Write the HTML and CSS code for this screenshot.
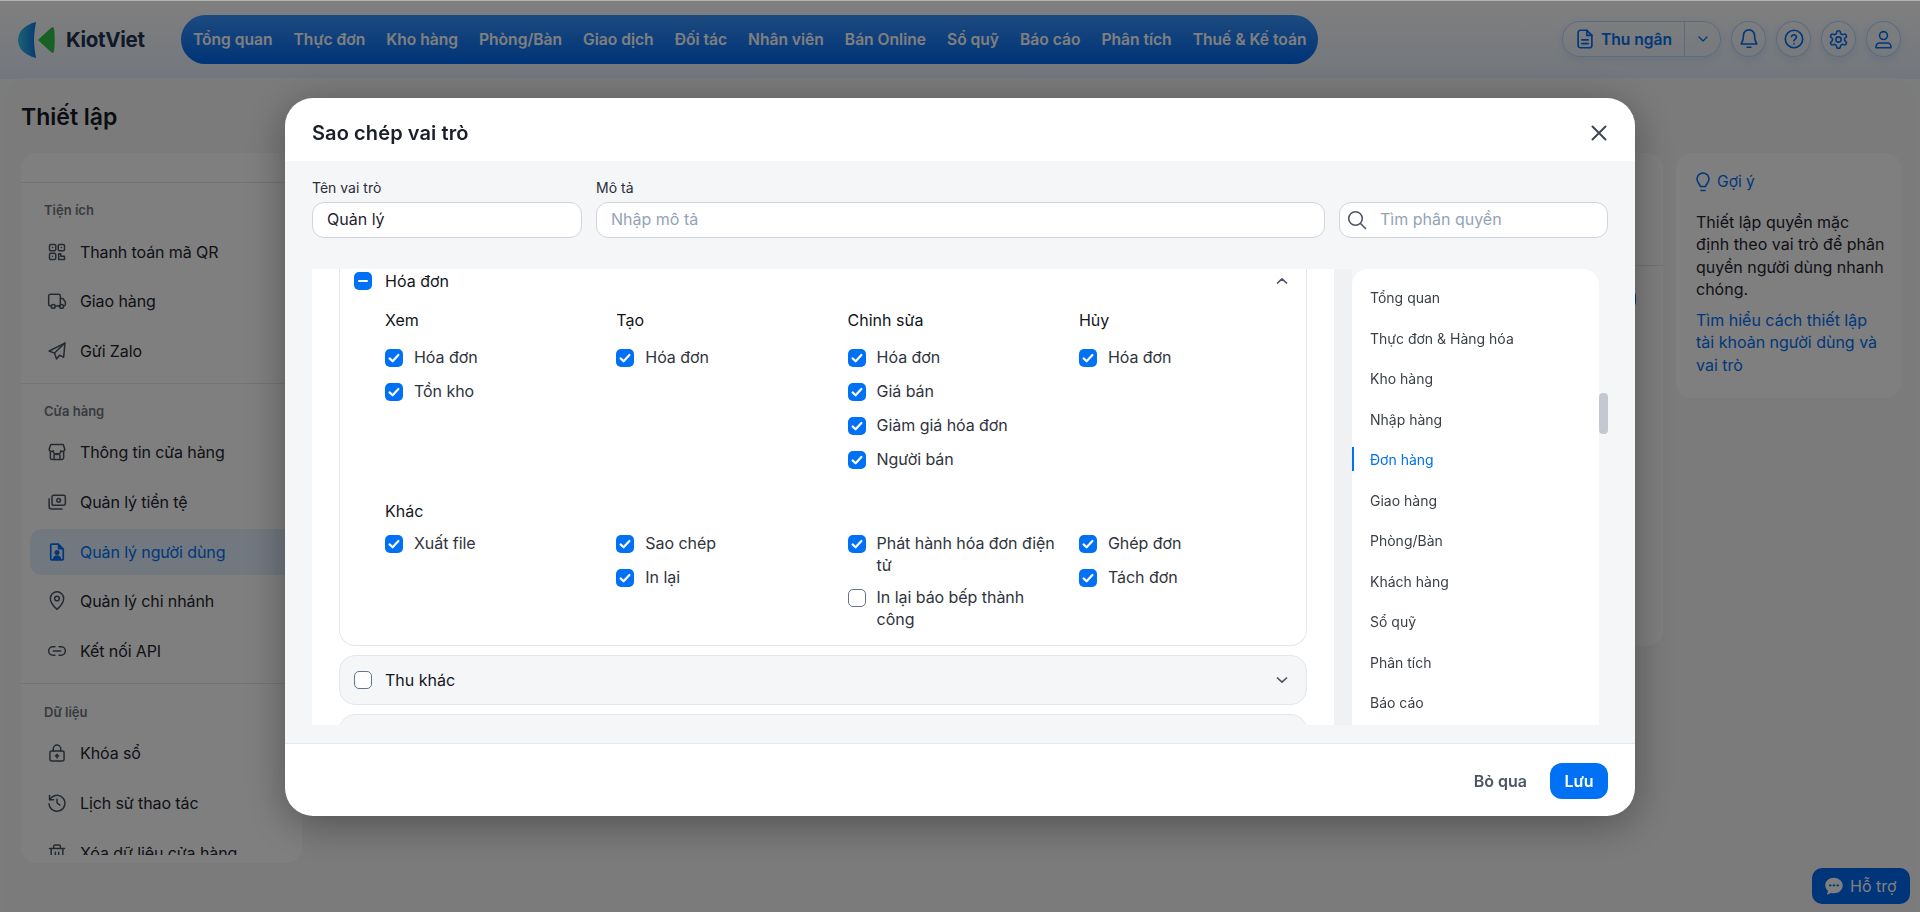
FILE: index.html
```html
<!DOCTYPE html>
<html lang="vi">
<head>
    <meta charset="UTF-8">
    <title>Thiết lập</title>
    <link rel="stylesheet" href="styles.css">
</head>
<body>
    <svg class="sprite" aria-hidden="true">
        <symbol id="i-check" viewBox="0 0 18 18"><path d="M4.6 9.4l3 2.9 5.8-6.3" fill="none" stroke="#fff" stroke-width="2.2" stroke-linecap="round" stroke-linejoin="round"/></symbol>
    </svg>

    <div class="page">
        <header class="topbar">
            <div class="logo">
                <svg width="38" height="36" viewBox="0 0 38 36">
                    <defs><linearGradient id="lens" x1="0" x2="1" y1="0" y2="0"><stop offset="0" stop-color="#36c6e8"/><stop offset="1" stop-color="#1274e0"/></linearGradient></defs>
                    <path d="M18 0C6 3 0 10 0 18s6 15 18 18c-1-6-2-12-2-18s1-12 2-18z" fill="url(#lens)"/>
                    <path d="M36 6c1 8 1 16 0 24-1 1-2 1-3 0L21 19c-1-1-1-1 0-2L33 6c1-1 2-1 3 0z" fill="#2fc24a"/>
                </svg>
                <span class="logo-text">KiotViet</span>
            </div>
            <nav class="main-nav">
                <a>Tổng quan</a>
                <a>Thực đơn</a>
                <a>Kho hàng</a>
                <a>Phòng/Bàn</a>
                <a>Giao dịch</a>
                <a>Đối tác</a>
                <a>Nhân viên</a>
                <a>Bán Online</a>
                <a>Sổ quỹ</a>
                <a>Báo cáo</a>
                <a>Phân tích</a>
                <a>Thuế &amp; Kế toán</a>
            </nav>
            <div class="top-actions">
                <div class="cashier">
                    <span class="cashier-main">
                        <svg class="ico" width="22" height="22" viewBox="0 0 24 24"><path d="M14 2.500H7a2.500 2.500 0 0 0-2.500 2.500v14A2.500 2.500 0 0 0 7 21.500h10a2.500 2.500 0 0 0 2.500-2.500V8z"/><path d="M14 2.500V8h5.500M8.500 13h7M8.500 17h7"/></svg>
                        Thu ngân
                    </span>
                    <span class="cashier-more">
                        <svg class="ico" width="16" height="16" viewBox="0 0 24 24"><path d="M6 9l6 6 6-6"/></svg>
                    </span>
                </div>
                <span class="round-btn"><svg class="ico" width="22" height="22" viewBox="0 0 24 24"><path d="M6 8a6 6 0 0 1 12 0c0 7 2.500 8.500 2.500 9.500h-17C3.500 16.500 6 15 6 8z"/><path d="M10 21h4"/></svg></span>
                <span class="round-btn"><svg class="ico" width="22" height="22" viewBox="0 0 24 24"><circle cx="12" cy="12" r="9.500"/><path d="M9.300 9.200a2.800 2.800 0 0 1 5.400.800c0 1.900-2.700 2.300-2.700 4"/><path d="M12 17.300v.2"/></svg></span>
                <span class="round-btn"><svg class="ico" width="21" height="21" viewBox="0 0 24 24"><path d="M12.220 2h-.44a2 2 0 0 0-2 2v.18a2 2 0 0 1-1 1.730l-.43.250a2 2 0 0 1-2 0l-.15-.080a2 2 0 0 0-2.730.730l-.220.380a2 2 0 0 0 .730 2.730l.150.100a2 2 0 0 1 1 1.720v.510a2 2 0 0 1-1 1.740l-.150.090a2 2 0 0 0-.730 2.730l.220.380a2 2 0 0 0 2.730.730l.150-.080a2 2 0 0 1 2 0l.430.250a2 2 0 0 1 1 1.730V20a2 2 0 0 0 2 2h.440a2 2 0 0 0 2-2v-.180a2 2 0 0 1 1-1.730l.430-.250a2 2 0 0 1 2 0l.150.080a2 2 0 0 0 2.730-.730l.220-.390a2 2 0 0 0-.730-2.730l-.150-.080a2 2 0 0 1-1-1.740v-.500a2 2 0 0 1 1-1.740l.150-.090a2 2 0 0 0 .730-2.730l-.220-.380a2 2 0 0 0-2.730-.730l-.150.080a2 2 0 0 1-2 0l-.430-.250a2 2 0 0 1-1-1.730V4a2 2 0 0 0-2-2z"/><circle cx="12" cy="12" r="3"/></svg></span>
                <span class="round-btn"><svg class="ico" width="21" height="21" viewBox="0 0 24 24"><circle cx="12" cy="7.500" r="4.500"/><path d="M3.500 21.500v-1.500a4 4 0 0 1 4-4h9a4 4 0 0 1 4 4v1.500z"/></svg></span>
            </div>
        </header>

        <main class="panel">
            <h1 class="page-title">Thiết lập</h1>
            <div class="panel-row">
                <aside class="sidebar">
                    <div class="sidebar-top"></div>
                    <div class="sidebar-scroll">
                        <section class="side-group">
                            <h3>Tiện ích</h3>
                            <a class="side-item"><svg class="ico" width="20" height="20" viewBox="0 0 24 24"><rect x="3" y="3" width="7.500" height="7.500" rx="1.500"/><rect x="13.500" y="3" width="7.500" height="7.500" rx="1.500"/><rect x="3" y="13.500" width="7.500" height="7.500" rx="1.500"/><path d="M6.700 6.700h.1M17.200 6.700h.1M6.700 17.200h.1M14 14h2.500v3H21v4h-7z"/></svg>Thanh toán mã QR</a>
                            <a class="side-item"><svg class="ico" width="20" height="20" viewBox="0 0 24 24"><path d="M5 18H4a2 2 0 0 1-2-2V6a2 2 0 0 1 2-2h10a2 2 0 0 1 2 2v12H10"/><path d="M16 9h3l3 4v3a2 2 0 0 1-2 2M14 18h1"/><circle cx="7.500" cy="18.500" r="2.300"/><circle cx="17.500" cy="18.500" r="2.300"/></svg>Giao hàng</a>
                            <a class="side-item"><svg class="ico" width="20" height="20" viewBox="0 0 24 24"><path d="M21.500 2.500L2.500 12l6.500 2.500 2.500 7 3.500-4.500 5 2.500z"/><path d="M21.500 2.500L9 14.500"/></svg>Gửi Zalo</a>
                        </section>
                        <section class="side-group">
                            <h3>Cửa hàng</h3>
                            <a class="side-item"><svg class="ico" width="20" height="20" viewBox="0 0 24 24"><path d="M4.500 3h15l2 6a3 3 0 0 1-5 1.500 3.500 3.500 0 0 1-9 0A3 3 0 0 1 2.500 9z"/><path d="M4 12v7a2 2 0 0 0 2 2h12a2 2 0 0 0 2-2v-7"/><path d="M8.500 21v-5a2 2 0 0 1 2-2h3a2 2 0 0 1 2 2v5"/></svg>Thông tin cửa hàng</a>
                            <a class="side-item"><svg class="ico" width="20" height="20" viewBox="0 0 24 24"><rect x="6" y="4" width="16" height="12" rx="2"/><circle cx="14" cy="10" r="2.200"/><path d="M2.500 8v9.500a3 3 0 0 0 3 3H18"/></svg>Quản lý tiền tệ</a>
                            <a class="side-item is-active"><svg width="20" height="20" viewBox="0 0 24 24"><path fill-rule="evenodd" d="M6 1.500h8L20.500 8v12.500a2 2 0 0 1-2 2h-13a2 2 0 0 1-2-2V3.500a2 2 0 0 1 2.500-2zM5.500 3.500v17h1.500c.5-3 2.500-4.500 5-4.500s4.500 1.500 5 4.500h1.500V9H13V3.500zM12 9.500a3 3 0 1 0 0 6 3 3 0 0 0 0-6z" fill="#0070f4"/></svg>Quản lý người dùng</a>
                            <a class="side-item"><svg class="ico" width="20" height="20" viewBox="0 0 24 24"><path d="M12 22s8-7 8-13a8 8 0 1 0-16 0c0 6 8 13 8 13z"/><circle cx="12" cy="9" r="2.800"/></svg>Quản lý chi nhánh</a>
                            <a class="side-item"><svg class="ico" width="20" height="20" viewBox="0 0 24 24"><path d="M9.500 7H7a5 5 0 0 0 0 10h2.500M14.500 7H17a5 5 0 0 1 0 10h-2.500M7.500 12h9"/></svg>Kết nối API</a>
                        </section>
                        <section class="side-group">
                            <h3>Dữ liệu</h3>
                            <a class="side-item"><svg class="ico" width="20" height="20" viewBox="0 0 24 24"><rect x="3.500" y="9.500" width="17" height="12" rx="2"/><path d="M7.500 9.500V7a4.500 4.500 0 0 1 9 0v2.500M12 18v-4M10.200 15.500l1.800-1.800 1.800 1.800"/></svg>Khóa sổ</a>
                            <a class="side-item"><svg class="ico" width="20" height="20" viewBox="0 0 24 24"><path d="M3 3v5h5"/><path d="M3.500 8a9.500 9.500 0 1 1-1 5"/><path d="M12 7.500V12l3.500 2.500"/></svg>Lịch sử thao tác</a>
                            <a class="side-item"><svg class="ico" width="20" height="20" viewBox="0 0 24 24"><path d="M3 6.500h18M8 6.500V4a1.500 1.500 0 0 1 1.500-1.500h5A1.500 1.500 0 0 1 16 4v2.500M5 6.500V20a2 2 0 0 0 2 2h10a2 2 0 0 0 2-2V6.500M10 11v6.500M14 11v6.500"/></svg>Xóa dữ liệu cửa hàng</a>
                        </section>
                    </div>
                </aside>

                <section class="main-card">
                    <div class="main-card-head"></div>
                    <div class="main-card-row"><span class="main-card-btn"></span></div>
                </section>

                <aside class="hint">
                    <div class="hint-title">
                        <svg width="14" height="20" viewBox="0 0 14 20" fill="none" stroke="#0070f4" stroke-width="1.600" stroke-linecap="round" stroke-linejoin="round"><path d="M4.500 14.500C4 12 1 10.500 1 7a6 6 0 0 1 12 0c0 3.500-3 5-3.500 7.500z"/><path d="M5 18.500h4"/></svg>
                        Gợi ý
                    </div>
                    <p>Thiết lập quyền mặc<br>định theo vai trò để phân<br>quyền người dùng nhanh<br>chóng.</p>
                    <a class="hint-link">Tìm hiểu cách thiết lập tài khoản người dùng và vai trò</a>
                </aside>
            </div>
        </main>

        <a class="support">
            <svg width="20" height="20" viewBox="0 0 24 24"><path d="M12 2C5.900 2 1.500 6 1.500 11c0 2.700 1.300 5 3.300 6.600L3.500 22.500l5.200-2.200c1 .3 2.200.5 3.300.500 6.100 0 10.500-4.300 10.500-9.300S18.100 2 12 2z" fill="#fff"/><circle cx="7.500" cy="11.200" r="1.400" fill="#0070f4"/><circle cx="12" cy="11.200" r="1.400" fill="#0070f4"/><circle cx="16.500" cy="11.200" r="1.400" fill="#0070f4"/></svg>
            Hỗ trợ
        </a>
    </div>

    <div class="overlay">
        <div class="modal">
            <div class="modal-head">
                <h2>Sao chép vai trò</h2>
                <svg class="modal-close" width="18" height="18" viewBox="0 0 18 18"><path d="M2.500 2.500l13 13M15.500 2.500l-13 13"/></svg>
            </div>
            <div class="modal-body">
                <div class="form-row">
                    <label class="field field-name">
                        <span>Tên vai trò</span>
                        <input class="input" type="text" value="Quản lý">
                    </label>
                    <label class="field field-desc">
                        <span>Mô tả</span>
                        <input class="input" type="text" placeholder="Nhập mô tả">
                    </label>
                    <div class="search">
                        <svg width="22" height="22" viewBox="0 0 22 22" fill="none" stroke="#4b5563" stroke-width="1.600" stroke-linecap="round"><circle cx="9.500" cy="9.500" r="6.800"/><path d="M14.500 14.500l5 5"/></svg>
                        <input class="input input-search" type="text" placeholder="Tìm phân quyền">
                    </div>
                </div>

                <div class="perm-wrap">
                    <div class="perm-list">
                        <div class="acc acc-open">
                            <div class="acc-head">
                                <span class="cb on"><span class="cb-dash"></span></span>
                                <span class="acc-title">Hóa đơn</span>
                                <svg class="chev" width="14" height="14" viewBox="0 0 14 14"><path d="M2.500 9L7 4.800 11.500 9"/></svg>
                            </div>
                            <div class="acc-body">
                                <div class="perm-grid">
                                    <div class="perm-col">
                                        <h4>Xem</h4>
                                        <label class="perm"><span class="cb on"><svg width="18" height="18"><use href="#i-check"/></svg></span><span>Hóa đơn</span></label>
                                        <label class="perm"><span class="cb on"><svg width="18" height="18"><use href="#i-check"/></svg></span><span>Tồn kho</span></label>
                                    </div>
                                    <div class="perm-col">
                                        <h4>Tạo</h4>
                                        <label class="perm"><span class="cb on"><svg width="18" height="18"><use href="#i-check"/></svg></span><span>Hóa đơn</span></label>
                                    </div>
                                    <div class="perm-col">
                                        <h4>Chỉnh sửa</h4>
                                        <label class="perm"><span class="cb on"><svg width="18" height="18"><use href="#i-check"/></svg></span><span>Hóa đơn</span></label>
                                        <label class="perm"><span class="cb on"><svg width="18" height="18"><use href="#i-check"/></svg></span><span>Giá bán</span></label>
                                        <label class="perm"><span class="cb on"><svg width="18" height="18"><use href="#i-check"/></svg></span><span>Giảm giá hóa đơn</span></label>
                                        <label class="perm"><span class="cb on"><svg width="18" height="18"><use href="#i-check"/></svg></span><span>Người bán</span></label>
                                    </div>
                                    <div class="perm-col">
                                        <h4>Hủy</h4>
                                        <label class="perm"><span class="cb on"><svg width="18" height="18"><use href="#i-check"/></svg></span><span>Hóa đơn</span></label>
                                    </div>
                                </div>
                                <h4 class="other-title">Khác</h4>
                                <div class="perm-grid">
                                    <div class="perm-col">
                                        <label class="perm"><span class="cb on"><svg width="18" height="18"><use href="#i-check"/></svg></span><span>Xuất file</span></label>
                                    </div>
                                    <div class="perm-col">
                                        <label class="perm"><span class="cb on"><svg width="18" height="18"><use href="#i-check"/></svg></span><span>Sao chép</span></label>
                                        <label class="perm"><span class="cb on"><svg width="18" height="18"><use href="#i-check"/></svg></span><span>In lại</span></label>
                                    </div>
                                    <div class="perm-col">
                                        <label class="perm"><span class="cb on"><svg width="18" height="18"><use href="#i-check"/></svg></span><span>Phát hành hóa đơn điện tử</span></label>
                                        <label class="perm"><span class="cb"></span><span>In lại báo bếp thành công</span></label>
                                    </div>
                                    <div class="perm-col">
                                        <label class="perm"><span class="cb on"><svg width="18" height="18"><use href="#i-check"/></svg></span><span>Ghép đơn</span></label>
                                        <label class="perm"><span class="cb on"><svg width="18" height="18"><use href="#i-check"/></svg></span><span>Tách đơn</span></label>
                                    </div>
                                </div>
                            </div>
                        </div>
                        <div class="acc">
                            <div class="acc-head">
                                <span class="cb"></span>
                                <span class="acc-title">Thu khác</span>
                                <svg class="chev" width="14" height="14" viewBox="0 0 14 14"><path d="M2.500 5L7 9.200 11.500 5"/></svg>
                            </div>
                        </div>
                        <div class="acc acc-next"></div>
                    </div>

                    <div class="perm-gutter"></div>

                    <ul class="perm-nav">
                        <li>Tổng quan</li>
                        <li>Thực đơn &amp; Hàng hóa</li>
                        <li>Kho hàng</li>
                        <li>Nhập hàng</li>
                        <li class="is-active">Đơn hàng</li>
                        <li>Giao hàng</li>
                        <li>Phòng/Bàn</li>
                        <li>Khách hàng</li>
                        <li>Sổ quỹ</li>
                        <li>Phân tích</li>
                        <li>Báo cáo</li>
                    </ul>

                    <div class="perm-scroll"><span class="thumb"></span></div>
                </div>
            </div>
            <div class="modal-foot">
                <button class="btn btn-ghost" type="button">Bỏ qua</button>
                <button class="btn btn-primary" type="button">Lưu</button>
            </div>
        </div>
    </div>
</body>
</html>
```

FILE: styles.css
```css
/* page */
* {
    box-sizing: border-box;
}
html, body {
    height: 100%;
}
body {
    margin: 0;
    font-family: Inter, "Noto Sans", sans-serif;
    font-size: 16px;
    color: #1f2430;
    background: #fafefe;
    overflow: hidden;
}
.sprite {
    display: none;
}
.ico {
    fill: none;
    stroke: currentColor;
    stroke-width: 1.8;
    stroke-linecap: round;
    stroke-linejoin: round;
    flex-shrink: 0;
}
.page {
    height: 100%;
    display: flex;
    flex-direction: column;
    border-top: 1px solid #b4b4b4;
    background: linear-gradient(180deg, #fff 0, #e6eefa 78px, #f6fbf9 78px);
}

/* top bar */
.topbar {
    height: 77px;
    flex-shrink: 0;
    display: flex;
    align-items: flex-start;
    padding: 14px 19px 0 18px;
}
.logo {
    width: 163px;
    height: 49px;
    display: flex;
    align-items: center;
    gap: 10px;
}
.logo svg {
    flex-shrink: 0;
}
.logo-text {
    font-size: 20.500px;
    font-weight: 700;
    color: #1e3350;
    letter-spacing: -0.3px;
}
.main-nav {
    height: 49px;
    display: flex;
    align-items: center;
    gap: 21px;
    padding: 0 12px;
    border-radius: 25px;
    background: linear-gradient(180deg, #3a94ff 0, #0068f0 100%);
}
.main-nav a {
    color: #fff;
    font-size: 15.600px;
    font-weight: 600;
    white-space: nowrap;
}
.top-actions {
    margin-left: auto;
    display: flex;
    gap: 10px;
    margin-top: 6px;
}
.cashier {
    width: 159px;
    height: 36px;
    display: flex;
    border: 1px solid #b7d5fb;
    border-radius: 18px;
    color: #0070f4;
    box-shadow: 0 2px 8px rgba(0, 112, 244, 0.12);
}
.cashier-main {
    flex: 1;
    display: flex;
    align-items: center;
    gap: 5px;
    padding-left: 11px;
    font-size: 15.600px;
    font-weight: 600;
    border-right: 1px solid #b7d5fb;
}
.cashier-more {
    width: 35px;
    display: flex;
    align-items: center;
    justify-content: center;
}
.round-btn {
    width: 35px;
    height: 36px;
    display: flex;
    align-items: center;
    justify-content: center;
    border: 1px solid #b7d5fb;
    border-radius: 50%;
    color: #0070f4;
    box-shadow: 0 2px 8px rgba(0, 112, 244, 0.12);
}

/* settings panel behind the dialog */
.panel {
    flex: 1;
    margin: 0 4px;
    padding: 0 15px 0 17px;
    border-radius: 24px 24px 0 0;
    background: #f7f7f7;
    min-height: 0;
}
.page-title {
    margin: 0;
    padding-top: 23px;
    height: 75px;
    font-size: 23px;
    line-height: 32px;
    font-weight: 600;
    color: #141a24;
}
.panel-row {
    display: flex;
    align-items: flex-start;
    gap: 13px;
}
.sidebar {
    width: 281px;
    height: 710px;
    flex-shrink: 0;
    background: #fff;
    border-radius: 16px;
}
.sidebar-top {
    height: 30px;
    border-bottom: 1px solid #e5e7eb;
}
.sidebar-scroll {
    height: 672px;
    overflow: hidden;
}
.side-group {
    display: flex;
    flex-direction: column;
    gap: 3.600px;
    padding: 17px 6px 9px 9px;
    border-bottom: 1px solid #e5e7eb;
}
.side-group:last-child {
    padding-top: 18px;
    border-bottom: none;
}
.side-group h3 {
    margin: 0 0 5px 14px;
    font-size: 13px;
    line-height: 20px;
    font-weight: 600;
    color: #6f7680;
}
.side-item {
    height: 46px;
    flex-shrink: 0;
    display: flex;
    align-items: center;
    gap: 13px;
    padding-left: 17px;
    border-radius: 12px;
    color: #1f2430;
    letter-spacing: -0.1px;
}
.side-item .ico {
    color: #4b5563;
}
.side-item.is-active {
    background: #e4f0ff;
    color: #0070f4;
}
.main-card {
    flex: 1;
    height: 493px;
    background: #fff;
    border-radius: 16px;
}
.main-card-head {
    height: 113px;
    border-bottom: 1px solid #e5e7eb;
}
.main-card-row {
    display: flex;
    justify-content: flex-end;
    padding: 24px 27px 0 0;
}
.main-card-btn {
    width: 80px;
    height: 18px;
    border-radius: 6px;
    background: #0070f4;
}
.hint {
    width: 225px;
    height: 245px;
    flex-shrink: 0;
    padding: 18px 18px 18px 20px;
    background: #fff;
    border-radius: 16px;
    line-height: 22.500px;
}
.hint-title {
    display: flex;
    align-items: center;
    gap: 7px;
    color: #0070f4;
    font-size: 15.600px;
    font-weight: 400;
}
.hint p {
    margin: 17px -8px 8px 0;
    color: #1f2430;
}
.hint-link {
    color: #0070f4;
}
.support {
    position: fixed;
    right: 10px;
    bottom: 8px;
    width: 98px;
    height: 36px;
    display: flex;
    align-items: center;
    gap: 6px;
    padding-left: 12px;
    background: #006af4;
    border-radius: 10px;
    color: #fff;
}

/* dialog */
.overlay {
    position: fixed;
    top: 1px;
    left: 0;
    right: 0;
    bottom: 0;
    padding-top: 1px;
    display: flex;
    align-items: center;
    justify-content: center;
    background: rgba(0, 0, 0, 0.5);
}
.modal {
    width: 1350px;
    height: 718px;
    display: flex;
    flex-direction: column;
    background: #fff;
    border-radius: 28px;
    overflow: hidden;
    box-shadow: 0 8px 40px rgba(0, 0, 0, 0.35);
}
.modal-head {
    height: 63px;
    flex-shrink: 0;
    display: flex;
    align-items: center;
    justify-content: space-between;
    padding: 6px 27px 0;
}
.modal-head h2 {
    margin: 0;
    font-size: 20px;
    font-weight: 600;
    letter-spacing: 0.1px;
    color: #1a1f29;
}
.modal-close {
    fill: none;
    stroke: #3f4754;
    stroke-width: 2;
    stroke-linecap: round;
}
.modal-body {
    flex: 1;
    padding: 17px 27px 18px;
    background: #f5f6f8;
    border-bottom: 1px solid #e5e7eb;
    min-height: 0;
}
.form-row {
    display: flex;
    align-items: flex-end;
    gap: 14px;
}
.field {
    display: flex;
    flex-direction: column;
    gap: 4px;
}
.field span {
    font-size: 14px;
    line-height: 20px;
    color: #2a2f38;
}
.field-name {
    width: 270px;
}
.field-desc {
    flex: 1;
}
.input {
    width: 100%;
    height: 36px;
    padding: 0 14px 3px;
    border: 1px solid #d1d5db;
    border-radius: 12px;
    background: #fff;
    font: inherit;
    color: #1f2430;
    outline: none;
}
.input::placeholder {
    color: #94a3b8;
    opacity: 1;
}
.search {
    position: relative;
    width: 269px;
}
.search svg {
    position: absolute;
    left: 7px;
    top: 7px;
}
.input-search {
    padding-left: 40px;
}

/* permissions */
.perm-wrap {
    height: 456px;
    margin-top: 31px;
    display: flex;
}
.perm-list {
    width: 1022px;
    flex-shrink: 0;
    display: flex;
    flex-direction: column;
    gap: 9px;
    padding: 0 27px;
    background: #fff;
    overflow: hidden;
}
.acc {
    flex-shrink: 0;
    border: 1px solid #e5e7eb;
    border-radius: 16px;
    background: #f5f6f8;
}
.acc-open {
    background: #fff;
    border-top: none;
    border-radius: 0 0 16px 16px;
}
.acc-next {
    height: 40px;
}
.acc-head {
    height: 48px;
    display: flex;
    align-items: center;
    gap: 13px;
    padding: 0 17px 0 14px;
}
.acc-open .acc-head {
    height: 24px;
}
.acc-title {
    flex: 1;
    font-weight: 400;
    color: #12151b;
}
.chev {
    fill: none;
    stroke: #4b5563;
    stroke-width: 1.700;
    stroke-linecap: round;
    stroke-linejoin: round;
}
.cb {
    width: 18px;
    height: 18px;
    flex-shrink: 0;
    display: inline-flex;
    align-items: center;
    justify-content: center;
    border: 1px solid #64748b;
    border-radius: 5px;
    background: #fff;
}
.cb.on {
    border: none;
    background: #0070f4;
}
.cb svg {
    display: block;
}
.cb-dash {
    width: 10px;
    height: 2px;
    border-radius: 1px;
    background: #fff;
}
.acc-body {
    padding: 16px 0 15px 45px;
}
.perm-grid {
    display: grid;
    grid-template-columns: repeat(4, 231.300px);
}
.perm-col h4,
.other-title {
    margin: 0 0 15px;
    font-size: 16px;
    line-height: 22px;
    font-weight: 400;
    color: #12151b;
}
.other-title {
    margin: 28px 0 10px;
}
.perm-col {
    display: flex;
    flex-direction: column;
    gap: 10px;
    padding-right: 22px;
}
.perm-col h4 {
    margin-bottom: 5px;
}
.perm {
    min-height: 24px;
    display: flex;
    align-items: flex-start;
    gap: 11px;
    line-height: 22px;
    letter-spacing: -0.05px;
    color: #2f343d;
}
.perm .cb {
    margin-top: 3px;
}
.perm-gutter {
    width: 18px;
    flex-shrink: 0;
    background: #f0f1f3;
}
.perm-nav {
    width: 247px;
    flex-shrink: 0;
    margin: 0;
    padding: 8.250px 0 0;
    list-style: none;
    background: #fff;
    border-radius: 16px 16px 0 0;
    overflow: hidden;
}
.perm-nav li {
    height: 40.500px;
    display: flex;
    align-items: center;
    padding-left: 18px;
    font-size: 14px;
    color: #3a3f48;
    position: relative;
}
.perm-nav li.is-active {
    color: #0070f4;
}
.perm-nav li.is-active::before {
    content: "";
    position: absolute;
    left: 0;
    top: 8px;
    width: 2px;
    height: 24px;
    background: #0070f4;
}
.perm-scroll {
    width: 9px;
    flex-shrink: 0;
    padding-top: 124px;
}
.thumb {
    display: block;
    height: 41px;
    border-radius: 4px;
    background: #c4c9d1;
}
.modal-foot {
    height: 72px;
    flex-shrink: 0;
    display: flex;
    align-items: center;
    justify-content: flex-end;
    gap: 23px;
    padding: 1px 27px 0;
}
.btn {
    height: 36px;
    border: none;
    border-radius: 12px;
    font: inherit;
    font-weight: 600;
    padding: 0;
    background: none;
}
.btn-ghost {
    color: #4b5563;
}
.btn-primary {
    width: 58px;
    background: #0070f4;
    color: #fff;
}
```
